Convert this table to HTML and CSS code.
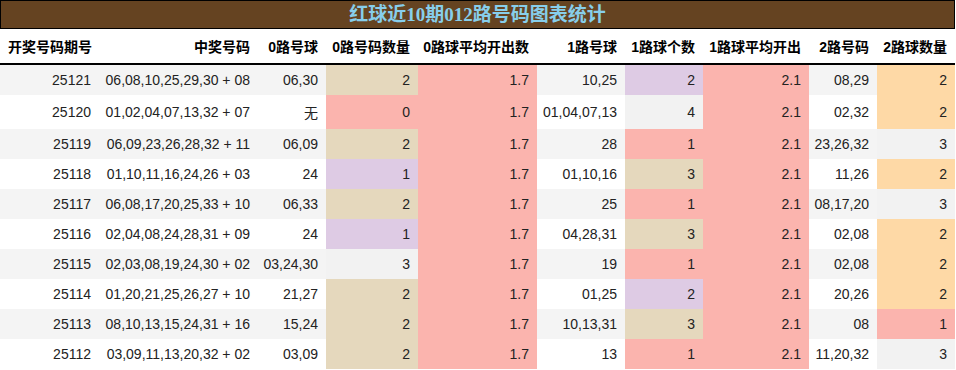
FILE: index.html
```html
<!DOCTYPE html>
<html lang="zh-CN">
<head>
<meta charset="utf-8">
<title>红球近10期012路号码图表统计</title>
<link rel="stylesheet" href="styles.css">
</head>
<body>
<div class="wrap">
  <div class="title">红球近10期012路号码图表统计</div>
  <table class="stats">
    <colgroup>
      <col class="c1"><col class="c2"><col class="c3"><col class="c4"><col class="c5">
      <col class="c6"><col class="c7"><col class="c8"><col class="c9"><col class="c10">
    </colgroup>
    <thead>
      <tr>
        <th class="left">开奖号码期号</th>
        <th>中奖号码</th>
        <th>0路号球</th>
        <th>0路号码数量</th>
        <th>0路球平均开出数</th>
        <th>1路号球</th>
        <th>1路球个数</th>
        <th>1路球平均开出</th>
        <th>2路号码</th>
        <th>2路球数量</th>
      </tr>
    </thead>
    <tbody>
      <tr class="odd"><td>25121</td><td>06,08,10,25,29,30 + 08</td><td>06,30</td><td class="t">2</td><td class="p">1.7</td><td>10,25</td><td class="v">2</td><td class="p">2.1</td><td>08,29</td><td class="o">2</td></tr>
      <tr><td>25120</td><td>01,02,04,07,13,32 + 07</td><td>无</td><td class="p">0</td><td class="p">1.7</td><td>01,04,07,13</td><td class="g">4</td><td class="p">2.1</td><td>02,32</td><td class="o">2</td></tr>
      <tr class="odd"><td>25119</td><td>06,09,23,26,28,32 + 11</td><td>06,09</td><td class="t">2</td><td class="p">1.7</td><td>28</td><td class="p">1</td><td class="p">2.1</td><td>23,26,32</td><td class="g">3</td></tr>
      <tr><td>25118</td><td>01,10,11,16,24,26 + 03</td><td>24</td><td class="v">1</td><td class="p">1.7</td><td>01,10,16</td><td class="t">3</td><td class="p">2.1</td><td>11,26</td><td class="o">2</td></tr>
      <tr class="odd"><td>25117</td><td>06,08,17,20,25,33 + 10</td><td>06,33</td><td class="t">2</td><td class="p">1.7</td><td>25</td><td class="p">1</td><td class="p">2.1</td><td>08,17,20</td><td class="g">3</td></tr>
      <tr><td>25116</td><td>02,04,08,24,28,31 + 09</td><td>24</td><td class="v">1</td><td class="p">1.7</td><td>04,28,31</td><td class="t">3</td><td class="p">2.1</td><td>02,08</td><td class="o">2</td></tr>
      <tr class="odd"><td>25115</td><td>02,03,08,19,24,30 + 02</td><td>03,24,30</td><td class="g">3</td><td class="p">1.7</td><td>19</td><td class="p">1</td><td class="p">2.1</td><td>02,08</td><td class="o">2</td></tr>
      <tr><td>25114</td><td>01,20,21,25,26,27 + 10</td><td>21,27</td><td class="t">2</td><td class="p">1.7</td><td>01,25</td><td class="v">2</td><td class="p">2.1</td><td>20,26</td><td class="o">2</td></tr>
      <tr class="odd"><td>25113</td><td>08,10,13,15,24,31 + 16</td><td>15,24</td><td class="t">2</td><td class="p">1.7</td><td>10,13,31</td><td class="t">3</td><td class="p">2.1</td><td>08</td><td class="p">1</td></tr>
      <tr><td>25112</td><td>03,09,11,13,20,32 + 02</td><td>03,09</td><td class="t">2</td><td class="p">1.7</td><td>13</td><td class="p">1</td><td class="p">2.1</td><td>11,20,32</td><td class="g">3</td></tr>
    </tbody>
  </table>
</div>
</body>
</html>
```
FILE: styles.css
```css
html, body {
  margin: 0;
  padding: 0;
  background: #ffffff;
}

.wrap {
  width: 955px;
}

.title {
  box-sizing: border-box;
  height: 29px;
  border: 1px solid #000000;
  background: #654321;
  color: #87ceeb;
  font-family: "Liberation Serif", "Noto Sans CJK SC", serif;
  font-weight: bold;
  font-size: 19px;
  line-height: 27px;
  text-align: center;
}

.stats {
  width: 955px;
  table-layout: fixed;
  border-collapse: collapse;
  border-spacing: 0;
  font-family: "Liberation Sans", "Noto Sans CJK SC", sans-serif;
  font-size: 14px;
}

.c1 { width: 99px; }
.c2 { width: 159px; }
.c3 { width: 68px; }
.c4 { width: 92px; }
.c5 { width: 119px; }
.c6 { width: 88px; }
.c7 { width: 78px; }
.c8 { width: 106px; }
.c9 { width: 68px; }
.c10 { width: 78px; }

.stats th {
  height: 35px;
  box-sizing: border-box;
  padding: 0 8px 0 0;
  text-align: right;
  font-weight: bold;
  color: #000000;
  border-bottom: 2px solid #000000;
  white-space: nowrap;
}

.stats th.left {
  text-align: left;
  padding-left: 8px;
}

.stats td {
  padding: 7px 8px 7px 0;
  text-align: right;
  color: #222222;
  white-space: nowrap;
}

.stats tr.odd td {
  background: #f4f4f4;
}

.stats td.p, .stats tr.odd td.p { background: #fbb4ae; }
.stats td.v, .stats tr.odd td.v { background: #decbe4; }
.stats td.t, .stats tr.odd td.t { background: #e5d8bd; }
.stats td.o, .stats tr.odd td.o { background: #fed9a6; }
.stats td.g, .stats tr.odd td.g { background: #f2f2f2; }
```
